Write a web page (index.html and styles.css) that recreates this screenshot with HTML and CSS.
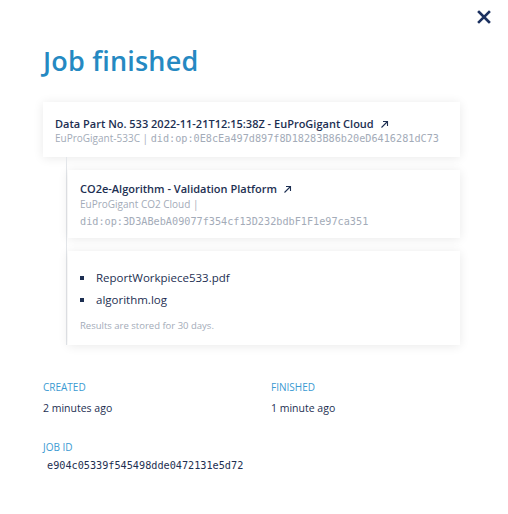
FILE: index.html
```html
<!DOCTYPE html>
<html>
<head>
<meta charset="utf-8">
<link rel="stylesheet" href="styles.css">
</head>
<body>
<div class="modal">
  <div class="topbar">
    <button class="close" aria-label="Close">
      <svg width="14" height="14" viewBox="0 0 14 14"><path d="M2 2 L12 12 M12 2 L2 12" stroke="#1c3160" stroke-width="2.6" stroke-linecap="square"/></svg>
    </button>
  </div>
  <h1 class="title">Job finished</h1>

  <div class="card card-main">
    <div class="card-title">Data Part No. 533 2022-11-21T12:15:38Z - EuProGigant Cloud <svg class="ext" width="9" height="9" viewBox="0 0 9 9"><path d="M1.5 7.5 L7.5 1.5 M3 1.5 H7.5 V6" fill="none" stroke="#1d2f52" stroke-width="1.1"/></svg></div>
    <div class="card-sub">EuProGigant-533C | <span class="mono">did:op:0E8cEa497d897f8D18283B86b20eD6416281dC73</span></div>
  </div>

  <div class="branch">
    <div class="card card-algo">
      <div class="card-title">CO2e-Algorithm - Validation Platform <svg class="ext" width="9" height="9" viewBox="0 0 9 9"><path d="M1.5 7.5 L7.5 1.5 M3 1.5 H7.5 V6" fill="none" stroke="#1d2f52" stroke-width="1.1"/></svg></div>
      <div class="card-sub">EuProGigant CO2 Cloud |</div>
      <div class="card-sub mono">did:op:3D3ABebA09077f354cf13D232bdbF1F1e97ca351</div>
    </div>
    <div class="card card-results">
      <ul class="files">
        <li>ReportWorkpiece533.pdf</li>
        <li>algorithm.log</li>
      </ul>
      <div class="note">Results are stored for 30 days.</div>
    </div>
  </div>

  <div class="meta">
    <div class="meta-item">
      <div class="label">CREATED</div>
      <div class="value">2 minutes ago</div>
    </div>
    <div class="meta-item">
      <div class="label">FINISHED</div>
      <div class="value">1 minute ago</div>
    </div>
    <div class="meta-item full">
      <div class="label">JOB ID</div>
      <div class="value mono id">e904c05339f545498dde0472131e5d72</div>
    </div>
  </div>
</div>
</body>
</html>
```
FILE: styles.css
```css
* { box-sizing: border-box; }
html, body { margin: 0; padding: 0; background: #fff; }
body {
  font-family: "Open Sans", "Noto Sans", sans-serif;
  color: #1d2f52;
}
.modal {
  width: 508px;
  padding: 10px 48px 0 43px;
}
.topbar {
  display: flex;
  justify-content: flex-end;
  margin-right: -31px;
}
.close {
  border: 0;
  background: none;
  padding: 0;
  width: 14px;
  height: 14px;
  display: flex;
}
.title {
  margin: 20px 0 0 0;
  font-size: 27px;
  font-weight: 600;
  color: #2589c2;
  line-height: 34px;
  letter-spacing: 0.2px;
}
.card {
  background: #fff;
  box-shadow: 0 1px 10px rgba(0, 0, 0, 0.09);
  padding: 12px 12px 10px 12px;
}
.card-main {
  margin-top: 24px;
  height: 55px;
  padding-top: 14px;
}
.card-main .card-sub { margin-top: -1px; }
.card-title {
  font-size: 11px;
  font-weight: 600;
  line-height: 16px;
  color: #1d2f52;
}
.ext {
  margin-left: 3px;
  vertical-align: -0.5px;
}
.card-sub {
  font-size: 10px;
  color: #a3abb8;
  line-height: 15px;
}
.mono {
  font-family: "DejaVu Sans Mono", "Liberation Mono", monospace;
  font-size: 10.2px;
}
.branch {
  margin-left: 23px;
  border-left: 1px solid #e3e6ea;
  padding-left: 1px;
  padding-top: 13px;
  display: flex;
  flex-direction: column;
  gap: 13px;
}
.card-algo {
  height: 68px;
  padding-top: 11px;
}
.card-algo .card-sub.mono { margin-top: 2px; }
.card-results {
  height: 94px;
  padding-top: 16px;
}
.files {
  margin: 0;
  padding: 0;
  list-style: none;
}
.files li {
  font-size: 11.5px;
  line-height: 22px;
  color: #1d2f52;
  display: flex;
  align-items: center;
}
.files li::before {
  content: "";
  width: 4px;
  height: 4px;
  background: #1d2f52;
  margin: 0 12px 0 0;
}
.note {
  margin-top: 8px;
  font-size: 9.5px;
  color: #a3abb8;
}
.meta {
  margin-top: 35px;
  display: grid;
  grid-template-columns: 228px 1fr;
  row-gap: 25px;
}
.meta-item.full { grid-column: 1 / -1; }
.label {
  font-size: 10px;
  color: #3a9ad2;
  line-height: 14px;
}
.value {
  margin-top: 7px;
  font-size: 10.5px;
  color: #1d2f52;
  line-height: 14px;
}
.value.id {
  margin-top: 5px;
  margin-left: 4px;
  font-size: 10.2px;
}
```
